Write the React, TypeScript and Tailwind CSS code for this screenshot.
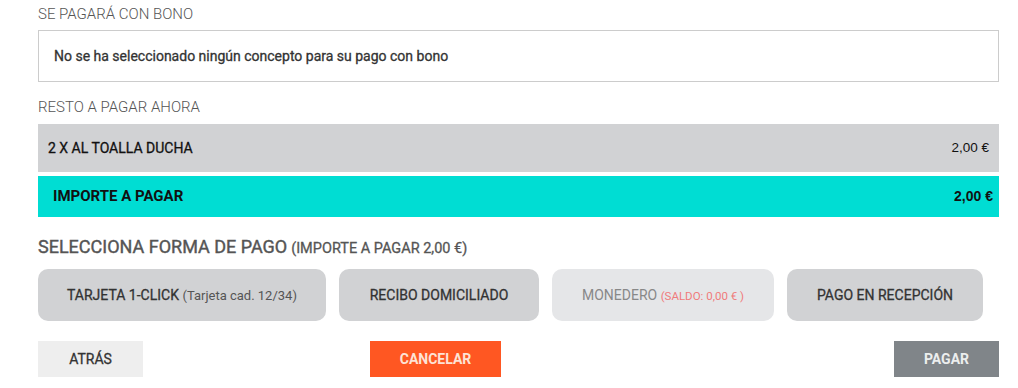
import React from 'react';

const font = { fontFamily: 'Roboto, "Liberation Sans", sans-serif' };
const priceFont = { fontFamily: '"Liberation Sans", Arial, sans-serif' };

export default function App() {
  return (
    <div className="w-[1018px] h-[388px] bg-white text-[#333] overflow-hidden" style={font}>
      <div className="pl-[38px] pr-[19px] pt-[4px]">
        <h3 className="text-[15px] font-light text-[#555] leading-[20px]">SE PAGARÁ CON BONO</h3>
        <div className="mt-[6px] h-[52px] border border-[#cccccc] flex items-center pl-[15px]">
          <span className="text-[14px] text-[#333] [-webkit-text-stroke:0.3px_#333]">No se ha seleccionado ningún concepto para su pago con bono</span>
        </div>

        <h3 className="mt-[15px] text-[15px] font-light text-[#555] leading-[20px]">RESTO A PAGAR AHORA</h3>
        <div className="mt-[7px] h-[48px] bg-[#d1d2d4] flex items-center justify-between pl-[10px] pr-[10px]">
          <span className="text-[14px] text-[#111] [-webkit-text-stroke:0.3px_#111]">2 X AL TOALLA DUCHA</span>
          <span className="text-[13.5px] text-[#111]" style={priceFont}>2,00 €</span>
        </div>
        <div className="mt-[4px] h-[41px] bg-[#00ddd3] flex items-center justify-between pl-[15px] pr-[6px]">
          <span className="text-[15px] font-bold text-[#111]">IMPORTE A PAGAR</span>
          <span className="text-[14px] font-bold text-[#111]" style={priceFont}>2,00 €</span>
        </div>

        <h2 className="mt-[19px] leading-[22px] text-[#555]">
          <span className="text-[18px] [-webkit-text-stroke:0.4px_#555]">SELECCIONA FORMA DE PAGO</span>{' '}
          <span className="text-[14.5px] [-webkit-text-stroke:0.3px_#555]">(IMPORTE A PAGAR 2,00 €)</span>
        </h2>

        <div className="mt-[9px] flex gap-[13px]">
          <button className="w-[288px] h-[52px] rounded-[10px] bg-[#d1d2d4] text-[14px] text-[#333]">
            <span className="[-webkit-text-stroke:0.3px_#333]">TARJETA 1-CLICK</span>{' '}
            <span className="text-[13px] text-[#555]">(Tarjeta cad. 12/34)</span>
          </button>
          <button className="w-[200px] h-[52px] rounded-[10px] bg-[#d1d2d4] text-[14px] text-[#333] [-webkit-text-stroke:0.3px_#333]">
            RECIBO DOMICILIADO
          </button>
          <button className="w-[222px] h-[52px] rounded-[10px] bg-[#e5e6e8] text-[14px] text-[#888]">
            MONEDERO <span className="text-[11.5px] text-[#f07b7b]">(SALDO: 0,00 € )</span>
          </button>
          <button className="w-[196px] h-[52px] rounded-[10px] bg-[#d1d2d4] text-[14px] text-[#333] [-webkit-text-stroke:0.3px_#333]">
            PAGO EN RECEPCIÓN
          </button>
        </div>

        <div className="mt-[20px] flex items-center">
          <button className="w-[105px] h-[36px] bg-[#eeeeee] text-[14px] text-[#333] [-webkit-text-stroke:0.3px_#333]">ATRÁS</button>
          <button className="ml-[227px] w-[131px] h-[36px] bg-[#ff5722] text-[14px] font-bold text-[#fde3d6]">CANCELAR</button>
          <button className="ml-auto w-[105px] h-[36px] bg-[#808589] text-[14px] font-bold text-[#eceeee]">PAGAR</button>
        </div>
      </div>
    </div>
  );
}
